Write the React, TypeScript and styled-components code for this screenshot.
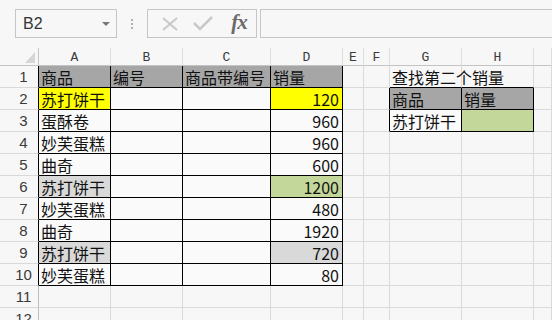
import React from "react";
import styled, { createGlobalStyle } from "styled-components";

const Global = createGlobalStyle`
  html, body { margin: 0; padding: 0; background: #f7f7f7; overflow: hidden; }
  body { width: 552px; height: 320px; font-family: "Noto Sans CJK SC", "Liberation Sans", sans-serif; }
`;

const Page = styled.div`
  width: 552px;
  height: 320px;
  overflow: hidden;
  background: #f7f7f7;
  display: flex;
  flex-direction: column;
`;

const Toolbar = styled.div`
  height: 48px;
  flex: none;
  display: flex;
  align-items: flex-start;
  padding: 9px 0 0 15px;
  box-sizing: border-box;
`;

const NameBox = styled.div`
  width: 102px;
  height: 29px;
  box-sizing: border-box;
  border: 1px solid #c6c6c6;
  display: flex;
  align-items: center;
  justify-content: space-between;
  padding: 0 6px 0 7px;
  font-family: "Liberation Sans", sans-serif;
  font-size: 16px;
  color: #333;
`;

const Caret = styled.span`
  width: 0;
  height: 0;
  border-left: 4px solid transparent;
  border-right: 4px solid transparent;
  border-top: 4px solid #777;
  margin-top: 1px;
`;

const Dots = styled.div`
  width: 30px;
  height: 29px;
  display: flex;
  flex-direction: column;
  align-items: center;
  justify-content: center;
  gap: 2px;
  span {
    width: 2px;
    height: 2px;
    background: #b0b0b0;
  }
`;

const FxBox = styled.div`
  width: 110px;
  height: 29px;
  box-sizing: border-box;
  border: 1px solid #c6c6c6;
  display: flex;
  align-items: center;
  padding-left: 9px;
`;

const FxIcon = styled.span<{ $w: number }>`
  width: ${(p) => p.$w}px;
  display: flex;
  align-items: center;
  justify-content: center;
`;

const FxText = styled.span`
  font-family: "Liberation Serif", "DejaVu Serif", serif;
  font-style: italic;
  font-weight: bold;
  font-size: 21px;
  color: #6a6a6a;
  letter-spacing: -1px;
  margin-top: -3px;
`;

const FormulaInput = styled.div`
  flex: 1;
  height: 29px;
  margin-left: 3px;
  box-sizing: border-box;
  border: 1px solid #c6c6c6;
  border-right: none;
`;

const Sheet = styled.div`
  display: grid;
  grid-template-columns: 39px 72px 72px 88px 72px 21px 26px 72px 72px 1fr;
  grid-auto-rows: 22px;
  grid-template-rows: 18px;
`;

const Corner = styled.div`
  box-sizing: border-box;
  border-right: 1px solid #c4c4c4;
  border-bottom: 1px solid #c4c4c4;
  display: flex;
  align-items: flex-end;
  justify-content: flex-end;
  padding: 0 3px 2px 0;
`;

const ColHead = styled.div`
  box-sizing: border-box;
  border-right: 1px solid #dedede;
  border-bottom: 1px solid #c4c4c4;
  display: flex;
  align-items: center;
  justify-content: center;
  font-family: "Liberation Mono", "DejaVu Sans Mono", monospace;
  font-size: 13px;
  color: #3a3a3a;
  padding-top: 2px;
`;

const RowHead = styled.div<{ $dark: boolean }>`
  box-sizing: border-box;
  border-right: 1px solid ${(p) => (p.$dark ? "#000" : "#bdbdbd")};
  border-bottom: 1px solid #d9d9d9;
  display: flex;
  align-items: center;
  justify-content: center;
  padding-left: 9px;
  font-family: "Liberation Sans", sans-serif;
  font-size: 15px;
  color: #3a3a3a;
`;

const Cell = styled.div<{ $fill: string; $br: boolean; $bb: boolean; $num: boolean }>`
  box-sizing: border-box;
  position: relative;
  background: ${(p) => p.$fill};
  border-right: 1px solid ${(p) => (p.$br ? "#000" : "#dadada")};
  border-bottom: 1px solid ${(p) => (p.$bb ? "#000" : "#dadada")};
  display: flex;
  align-items: center;
  justify-content: ${(p) => (p.$num ? "flex-end" : "flex-start")};
  padding: 1px 3px 0 2px;
  font-family: "Noto Sans CJK SC", "Liberation Sans", sans-serif;
  font-size: 16px;
  color: #111;
  white-space: nowrap;
  min-width: 0;
  overflow: visible;
`;

const Spill = styled.span`
  position: relative;
  z-index: 1;
`;

const COLS = ["A", "B", "C", "D", "E", "F", "G", "H", ""];

const GRAY = "#a6a6a6";
const LIGHT = "#d9d9d9";
const YELLOW = "#ffff00";
const GREEN = "#c4d79b";

type CellDef = { v?: string | number; fill?: string };

const data: Record<number, Record<number, CellDef>> = {
  1: { 0: { v: "商品", fill: GRAY }, 1: { v: "编号", fill: GRAY }, 2: { v: "商品带编号", fill: GRAY }, 3: { v: "销量", fill: GRAY }, 6: { v: "查找第二个销量" } },
  2: { 0: { v: "苏打饼干", fill: YELLOW }, 3: { v: 120, fill: YELLOW }, 6: { v: "商品", fill: GRAY }, 7: { v: "销量", fill: GRAY } },
  3: { 0: { v: "蛋酥卷" }, 3: { v: 960 }, 6: { v: "苏打饼干" }, 7: { fill: GREEN } },
  4: { 0: { v: "妙芙蛋糕" }, 3: { v: 960 } },
  5: { 0: { v: "曲奇" }, 3: { v: 600 } },
  6: { 0: { v: "苏打饼干", fill: LIGHT }, 3: { v: 1200, fill: GREEN } },
  7: { 0: { v: "妙芙蛋糕" }, 3: { v: 480 } },
  8: { 0: { v: "曲奇" }, 3: { v: 1920 } },
  9: { 0: { v: "苏打饼干", fill: LIGHT }, 3: { v: 720, fill: LIGHT } },
  10: { 0: { v: "妙芙蛋糕" }, 3: { v: 80 } },
};

const inTable = (r: number, c: number) =>
  (r >= 1 && r <= 10 && c >= 0 && c <= 3) || (r >= 2 && r <= 3 && c >= 6 && c <= 7);

const ROWS = Array.from({ length: 12 }, (_, i) => i + 1);

export default function App() {
  return (
    <Page>
      <Global />
      <Toolbar>
        <NameBox>
          <span>B2</span>
          <Caret />
        </NameBox>
        <Dots>
          <span />
          <span />
          <span />
        </Dots>
        <FxBox>
          <FxIcon $w={26}>
            <svg width="16" height="14" viewBox="0 0 16 14">
              <path d="M1 1 L15 13 M15 1 L1 13" stroke="#c9c9c9" strokeWidth="2" fill="none" />
            </svg>
          </FxIcon>
          <FxIcon $w={40}>
            <svg width="20" height="15" viewBox="0 0 20 15">
              <path d="M1 7 L7 13 L19 1" stroke="#c9c9c9" strokeWidth="2.6" fill="none" />
            </svg>
          </FxIcon>
          <FxIcon $w={32}>
            <FxText>fx</FxText>
          </FxIcon>
        </FxBox>
        <FormulaInput />
      </Toolbar>
      <Sheet>
        <Corner>
          <svg width="10" height="11" viewBox="0 0 10 11">
            <polygon points="10,0 10,11 0,11" fill="#d6d6d6" />
          </svg>
        </Corner>
        {COLS.map((c, i) => (
          <ColHead key={"h" + i}>{c}</ColHead>
        ))}
        {ROWS.map((r) => (
          <React.Fragment key={r}>
            <RowHead $dark={inTable(r, 0)}>{r}</RowHead>
            {COLS.map((_, c) => {
              const d = data[r]?.[c] ?? {};
              const br = inTable(r, c) || inTable(r, c + 1);
              const bb = inTable(r, c) || inTable(r + 1, c);
              return (
                <Cell
                  key={c}
                  $fill={d.fill ?? (inTable(r, c) ? "#fafafa" : "transparent")}
                  $br={br}
                  $bb={bb}
                  $num={typeof d.v === "number"}
                >
                  {d.v !== undefined ? <Spill>{d.v}</Spill> : null}
                </Cell>
              );
            })}
          </React.Fragment>
        ))}
      </Sheet>
    </Page>
  );
}
